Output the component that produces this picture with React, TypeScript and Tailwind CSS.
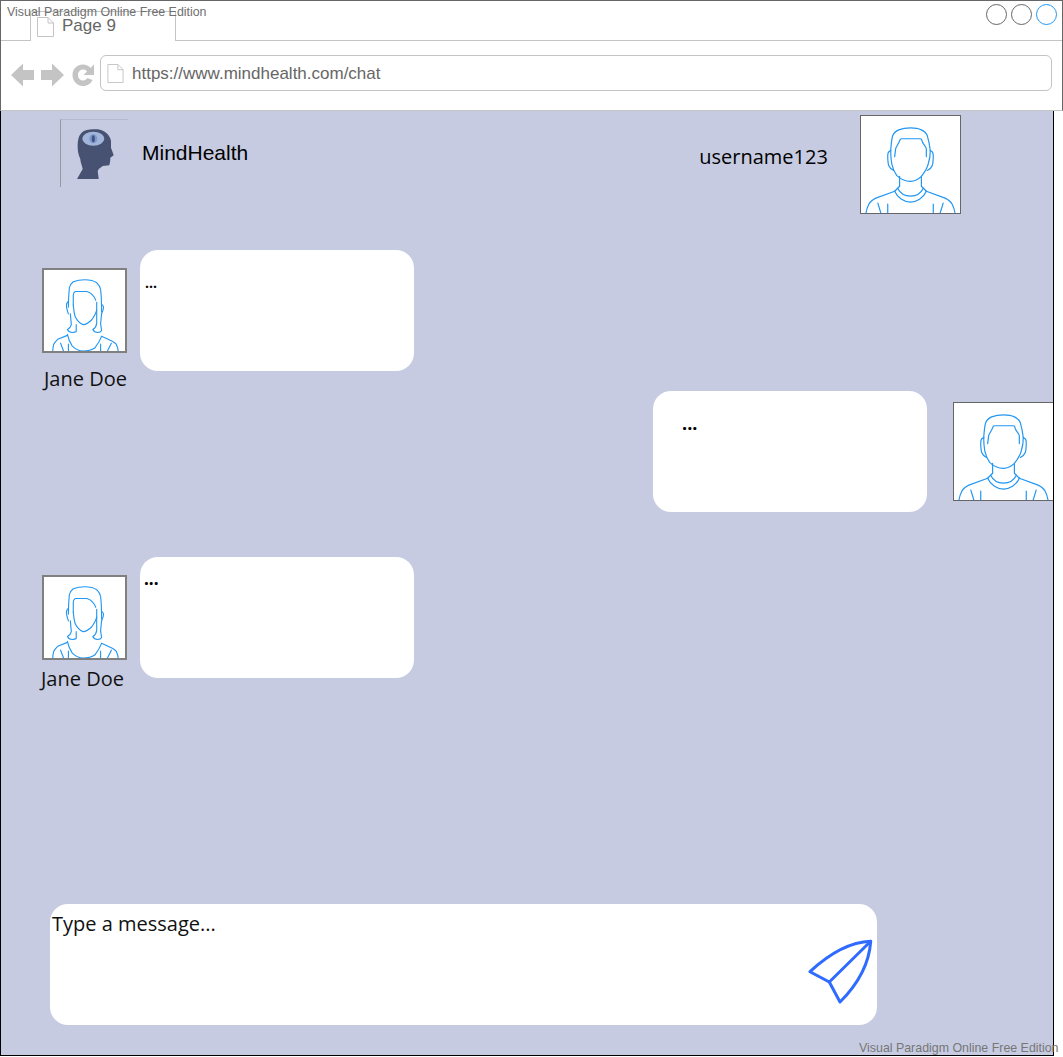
const SANS = "font-['Liberation_Sans',Arial,sans-serif]";
const OPEN = "font-['Open_Sans',sans-serif]";

function ManAvatar({ className }: { className: string }) {
  return (
    <div className={`bg-white border border-[#666] shrink-0 ${className}`}>
      <svg viewBox="0 0 100 98" className="w-full h-full block" fill="none" stroke="#2196f3" strokeWidth="1.2" strokeLinecap="round" strokeLinejoin="round">
        <path d="M30 35C30.5 28 31 23 32 20C33 17 35 15.500 38 14C42 12.500 46 12 50 12C54 12 58 12.500 61 14C64 15.500 66 17 67 20C68.500 25 69.500 30 70 35" />
        <path d="M34 41L35 33C36 30 38 28 39 25C39.500 23.500 40 23 41 23H60C61 23 61.500 24 62 26C63 29 65 30 66 33L66 41" />
        <path d="M30 35C30 41 30.500 45 31 48C32 53 34 57 36 60C40 64 45 66 50 66C54 66 58 64 61 61C64 57 67 53 68 48C69 45 70 41 70 35" />
        <path d="M30 35C28 35.500 27 38 27 40C27 44 27 47 28 50C29 53 31 54 33 55" />
        <path d="M70 35C72 35.500 73 38 73 40C73 44 73 47 72 50C71 53 69 54 67 55" />
        <path d="M39 61V71L34 76" />
        <path d="M61 61V71L66 76" />
        <path d="M37 73C40 79 45 81 50 81C55 81 60 79 63 73" />
        <path d="M34 76C37 83 44 87 50 87C56 87 63 83 66 76" />
        <path d="M34 76L15 83C11 85 9 87 8 89C6.500 92 5.500 95 5 98" />
        <path d="M66 76L85 83C89 85 91 87 92 89C93.500 92 94.500 95 95 98" />
        <path d="M17 88L20 98M27 89V98M73 89V98M83 88L80 98" />
      </svg>
    </div>
  );
}

function WomanAvatar() {
  return (
    <div className="bg-white border-2 border-[#808080] w-[85px] h-[85px] shrink-0">
      <svg viewBox="0 0 83 83" className="w-full h-full block" fill="none" stroke="#2196f3" strokeWidth="1.150" strokeLinecap="round" strokeLinejoin="round">
        <path d="M25 38C25 30 25.500 23 26 18C27 15 28 13.500 30 12C34 10.500 38 10 42 10C47 10 51 11 54 13C56 15 57.500 17 58 20C59 28 59 36 59 43" />
        <path d="M27 45L28 56C27.500 58 26 60 24 61C25 63 27 64 29 64C31 64 32.500 63.500 33 63L33 56" />
        <path d="M54 33V55C53.500 58 52 60 50 61C51 63 53 64 55 64C57 64 58.500 63 59 62L58 55L59 45" />
        <path d="M30 36V26C30 24 31 22.500 32 22H44C47 23 49 24.500 50 26C51.500 27.500 52.500 29 53 31" />
        <path d="M30 36C30.500 41 31 45 32 48C34 52 37 55 40 56C43 56 46 54 49 51C51 48 53 45 54 41" />
        <path d="M25 32C24 33 23 34.500 23 36C23 39 24 42 25 45" />
        <path d="M59 35C60 36 61 37 61 38C61 41 60 43 59 45" />
        <path d="M24 66C25 71 27 75 29 78C32 81 36 83 40 83C44 83 49 82 52 80C55 76 57.500 72 59 68" />
        <path d="M24 67L14 71C12 73 11 74 10 76C9.500 78 9 80 9 83" />
        <path d="M59 68L70 73C72 74 73 75 74 76C75 78 76 80 76 83" />
        <path d="M17 75L20 83M25 76V83M58 76V83M69 75L65 83" />
      </svg>
    </div>
  );
}

function Bubble({ dots }: { dots: string }) {
  return (
    <div className={`w-[274px] h-[121px] bg-white rounded-[18px] text-black ${OPEN} ${dots}`}>...</div>
  );
}

function DocIcon({ className }: { className: string }) {
  return (
    <svg viewBox="0 0 17 20" className={className} fill="#fff" stroke="#c4c4c4" strokeWidth="1">
      <path d="M0.500 0.500H11L16.500 6V19.500H0.500Z" />
      <path d="M11 0.500V6H16.500" fill="none" />
    </svg>
  );
}

export default function App() {
  return (
    <div className={`relative w-[1063px] h-[1057px] bg-white overflow-hidden ${SANS}`}>
      {/* browser chrome */}
      <div className="h-[111px] border-t border-x border-t-[#666] border-x-[#666] border-b border-b-[#c4c4c4] bg-white flex flex-col">
        <div className="h-[40px] border-b border-[#c4c4c4] flex justify-between relative">
          <div className="ml-[29px] mt-[10px] w-[146px] h-[30px] bg-white border-x border-t border-[#c4c4c4] flex items-start pl-[6px] pt-[5px] gap-[8px] z-10">
            <DocIcon className="w-[17px] h-[20px]" />
            <span className="text-[17px] leading-[18px] text-[#666]">Page 9</span>
          </div>
          <div className="flex gap-[4px] pt-[3px] pr-[5px]">
            <div className="w-[21px] h-[21px] rounded-full border border-[#666]" />
            <div className="w-[21px] h-[21px] rounded-full border border-[#666]" />
            <div className="w-[21px] h-[21px] rounded-full border border-[#2196f3]" />
          </div>
        </div>
        <div className="flex items-center flex-1 pl-[10px] pr-[10px] pb-[5px]">
          <svg viewBox="0 0 84 24" className="w-[84px] h-[24px] shrink-0 mt-[4px]" fill="#c4c4c4">
            <path d="M0 12L12 0.500V7H23V17H12V23.500Z" />
            <path d="M54 12L42 0.500V7H31V17H42V23.500Z" transform="translate(-1 0)" />
            <path d="M72 1.500C75 1.500 78 3 79.500 5L83 1.500V12H72.500L76 8.500C75 7 73.500 6.500 72 6.500C69 6.500 67 9 67 12C67 15 69 17.500 72 17.500C74 17.500 75.500 16.500 76.500 15L81.500 17C80 20.500 76.500 23 72 23C66 23 61.500 18 61.500 12C61.500 6 66 1.500 72 1.500Z" />
          </svg>
          <div className="ml-[5px] w-[952px] h-[36px] border border-[#c4c4c4] rounded-[6px] bg-white flex items-center pl-[6px]">
            <DocIcon className="w-[17px] h-[19px] shrink-0" />
            <span className="ml-[8px] mt-[1px] text-[17px] leading-[24px] text-[#666]">https://www.mindhealth.com/chat</span>
          </div>
        </div>
      </div>

      {/* page body */}
      <div className={`w-[1054px] h-[945px] bg-[#c6cbe1] border-x border-b border-black flex flex-col ${OPEN}`}>
        <header className="h-[139px] flex items-start shrink-0">
          <div className="ml-[59px] mt-[8px] w-[68px] h-[68px] border-l border-l-[#999] border-t border-t-[#b5b9cc] shrink-0">
            <svg viewBox="0 0 68 68" className="w-[68px] h-[68px] block">
              <path fill="#475272" d="M16 59L21.700 49C21 45 19.300 42 19.300 39C17.500 35 16.700 31 16.700 27.700C16.500 23 17 19 18.300 16C20 13 22 11 25 10.300C29 9 33 9 36.700 9.300C40 10 43 11 45 12.700C48 15 49.500 18 50 21V27.700L52.700 35.300L49.300 37.700C49.500 40 49 43 48.300 45.300L41.700 46C39.500 47.500 37.500 49 36.700 51L37.700 59Z" />
              <ellipse cx="32.300" cy="18.700" rx="11" ry="7" fill="#a3b6da" />
              <ellipse cx="32.300" cy="18.700" rx="4" ry="4.500" fill="#7d98cc" />
              <ellipse cx="32.300" cy="18.700" rx="1.500" ry="3.500" fill="#3f5280" />
            </svg>
          </div>
          <span className={`ml-[14px] mt-[29px] text-[21px] leading-[26px] text-black ${SANS}`}>MindHealth</span>
          <span className="ml-[451px] mt-[32px] text-[20px] leading-[28px] text-black">username123</span>
          <ManAvatar className="ml-[32px] mt-[4px] w-[101px] h-[99px]" />
        </header>

        <div className="flex items-start pl-[41px] h-[141px] shrink-0">
          <div className="pt-[18px] w-[85px]">
            <WomanAvatar />
            <div className="ml-[2px] mt-[12px] text-[20px] leading-[28px] text-[#111] whitespace-nowrap">Jane Doe</div>
          </div>
          <div className="ml-[13px]"><Bubble dots="pl-[5px] pt-[17px] text-[14px] leading-[32px] font-bold" /></div>
        </div>

        <div className="flex items-start justify-end h-[166px] shrink-0">
          <Bubble dots="pl-[29px] pt-[16px] text-[18px] leading-[32px] font-bold" />
          <ManAvatar className="ml-[26px] mt-[11px] w-[100px] h-[99px] !border-r-0" />
        </div>

        <div className="flex items-start pl-[41px] shrink-0">
          <div className="pt-[18px] w-[85px]">
            <WomanAvatar />
            <div className="-ml-[1px] mt-[5px] text-[20px] leading-[28px] text-[#111] whitespace-nowrap">Jane Doe</div>
          </div>
          <div className="ml-[13px]"><Bubble dots="pl-[4px] pt-[6px] text-[17px] leading-[32px] font-bold" /></div>
        </div>

        <div className="mt-auto mb-[30px] ml-[49px] w-[827px] h-[121px] bg-white rounded-[18px] flex justify-between shrink-0">
          <span className="ml-[2px] mt-[6px] text-[20px] leading-[28px] text-[#111]">Type a message...</span>
          <svg viewBox="0 0 66 66" className="w-[66px] h-[66px] mt-[35px] mr-[3px]" fill="none" stroke="#2f6bff" strokeWidth="3" strokeLinejoin="round" strokeLinecap="round">
            <path d="M62.700 2.300C42 3 20 16 2 32.700L21.300 43L32 63C48 47 61 27 62.700 2.300Z" />
            <path d="M62.700 2.300L21.300 43" />
          </svg>
        </div>
      </div>

      {/* watermarks */}
      <span className="absolute left-[7px] top-[5px] z-20 text-[12.400px] leading-[14px] text-[#707070]">Visual Paradigm Online Free Edition</span>
      <span className="absolute left-[859px] top-[1041px] z-20 text-[12.400px] leading-[14px] text-[#777] whitespace-nowrap">Visual Paradigm Online Free Edition</span>
    </div>
  );
}
